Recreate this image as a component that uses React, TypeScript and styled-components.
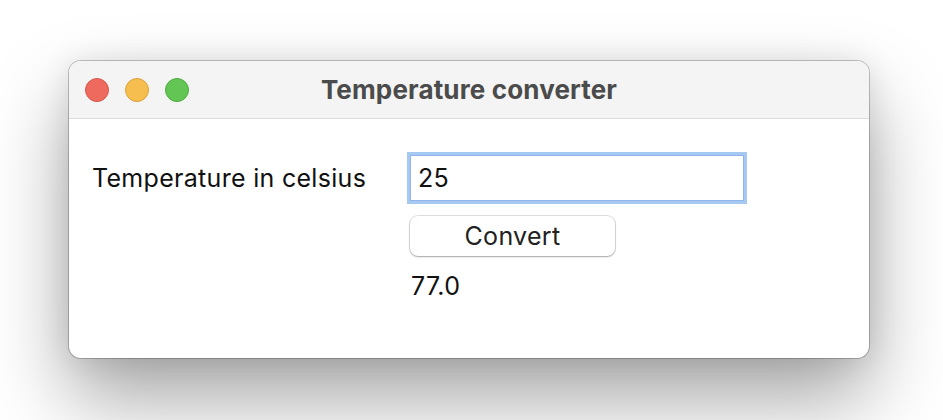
import React, { useState } from 'react';
import styled, { createGlobalStyle } from 'styled-components';

const GlobalStyle = createGlobalStyle`
  html, body {
    margin: 0;
    padding: 0;
    background: #ffffff;
  }
  body {
    font-family: Inter, "Liberation Sans", Arial, sans-serif;
  }
`;

const Desktop = styled.div`
  width: 943px;
  height: 420px;
  padding: 61px 0 0 69px;
  box-sizing: border-box;
  overflow: hidden;
  background: #ffffff;
`;

const Window = styled.div`
  width: 800px;
  height: 297px;
  border-radius: 12px;
  background: #ffffff;
  overflow: hidden;
  display: flex;
  flex-direction: column;
  box-shadow:
    0 0 0 1px rgba(0, 0, 0, 0.22),
    0 40px 80px rgba(0, 0, 0, 0.36),
    0 0 30px rgba(0, 0, 0, 0.1);
`;

const TitleBar = styled.div`
  height: 57px;
  flex-shrink: 0;
  display: flex;
  align-items: center;
  position: relative;
  background: #f4f4f4;
  border-bottom: 1px solid #dcdcdc;
  padding-left: 16px;
`;

const Lights = styled.div`
  display: flex;
  gap: 16px;
`;

const Light = styled.span<{ $fill: string; $edge: string }>`
  width: 24px;
  height: 24px;
  border-radius: 50%;
  box-sizing: border-box;
  background: ${(p) => p.$fill};
  border: 1px solid ${(p) => p.$edge};
`;

const Title = styled.div`
  position: absolute;
  left: 0;
  right: 0;
  text-align: center;
  font-size: 26px;
  font-weight: 700;
  letter-spacing: 0.15px;
  color: #4b4b4b;
  pointer-events: none;
`;

const Body = styled.div`
  display: grid;
  grid-template-columns: 318px 334px;
  row-gap: 15px;
  padding: 36px 0 0 23px;
  align-items: center;
  font-size: 25px;
  letter-spacing: 0.3px;
`;

const Label = styled.label`
  color: #111;
`;

const Field = styled.input`
  width: 334px;
  height: 46px;
  box-sizing: border-box;
  border: 1px solid #8fb4e6;
  box-shadow: 0 0 0 3px #a6c9f4;
  outline: none;
  padding: 0 7px;
  font-family: inherit;
  font-size: inherit;
  letter-spacing: inherit;
  color: #111;
  background: #fff;
`;

const Button = styled.button`
  grid-column: 2;
  width: 205px;
  height: 40px;
  border: none;
  border-radius: 8px;
  background: #ffffff;
  box-shadow: 0 0 0 1px rgba(0, 0, 0, 0.12), 0 1px 2px rgba(0, 0, 0, 0.25);
  font-family: inherit;
  font-size: inherit;
  letter-spacing: inherit;
  color: #222;
  cursor: pointer;
`;

const Result = styled.div`
  grid-column: 2;
  color: #111;
  padding: 0 0 0 1px;
`;

export default function App() {
  const [value, setValue] = useState('25');
  const [result, setResult] = useState('77.0');

  const convert = () => {
    const c = parseFloat(value);
    setResult(isNaN(c) ? '' : (c * 9 / 5 + 32).toFixed(1));
  };

  return (
    <Desktop>
      <GlobalStyle />
      <Window>
        <TitleBar>
          <Lights>
            <Light $fill="#ee6a5f" $edge="#d6564c" />
            <Light $fill="#f6be4f" $edge="#d9a23a" />
            <Light $fill="#62c554" $edge="#4eac41" />
          </Lights>
          <Title>Temperature converter</Title>
        </TitleBar>
        <Body>
          <Label htmlFor="celsius">Temperature in celsius</Label>
          <Field id="celsius" value={value} onChange={(e) => setValue(e.target.value)} />
          <Button onClick={convert}>Convert</Button>
          <Result>{result}</Result>
        </Body>
      </Window>
    </Desktop>
  );
}
